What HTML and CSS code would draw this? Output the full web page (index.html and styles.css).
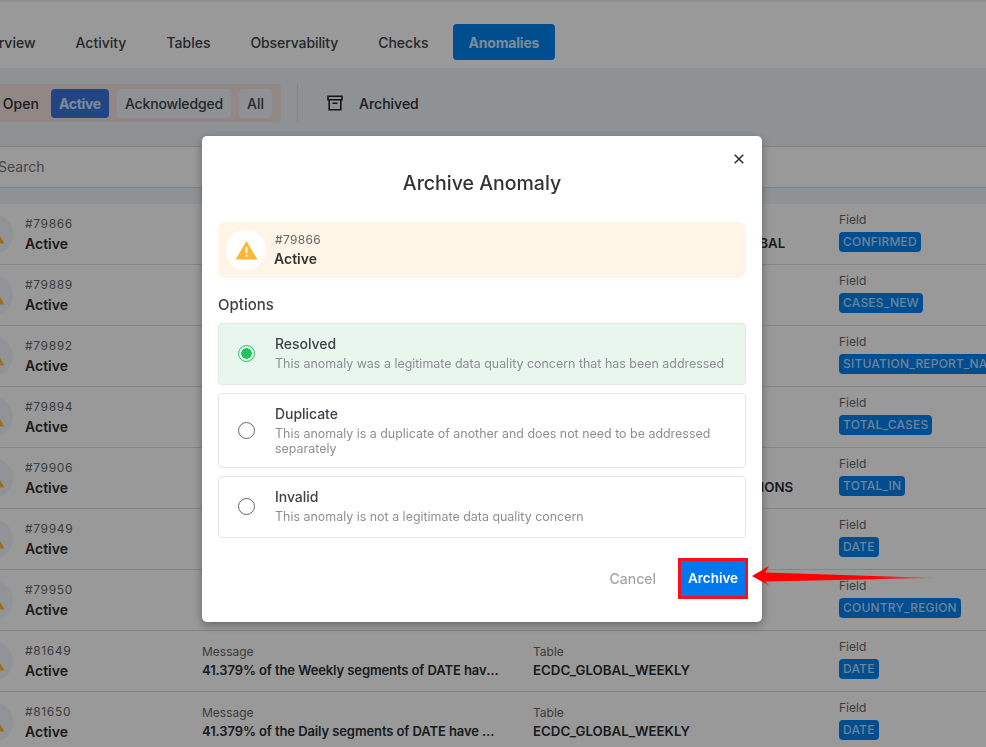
FILE: index.html
```html
<!DOCTYPE html>
<html lang="en">
<head>
<meta charset="utf-8">
<title>Archive Anomaly</title>
<link rel="stylesheet" href="styles.css">
</head>
<body>
<div class="page">
  <nav class="tabs">
    <a class="tab tab-first">Overview</a>
    <a class="tab">Activity</a>
    <a class="tab">Tables</a>
    <a class="tab tab-tight">Observability</a>
    <a class="tab">Checks</a>
    <a class="tab tab-active">Anomalies</a>
  </nav>
  <section class="panel">
    <div class="toolbar">
      <div class="pills">
        <span class="pill pill-open">Open</span>
        <span class="pill pill-active">Active</span>
        <span class="pill pill-plain">Acknowledged</span>
        <span class="pill pill-plain">All</span>
      </div>
      <div class="divider"></div>
      <svg class="archive-icon" viewBox="0 0 16 16" width="16" height="16"><path d="M1 1.2h14v3.6H1zM2.2 4.8v10h11.6v-10M5.5 8.2h5" fill="none" stroke="#1f2328" stroke-width="1.6"/></svg>
      <span class="archived">Archived</span>
    </div>
    <div class="search">Search</div>
  </section>
  <div class="rows">
    <div class="row"><div class="row-icon"><svg viewBox="0 0 24 21" width="23" height="20"><path class="tri" d="M12 1 23.500 20.500H.5z"/><path class="bang" d="M11 7.500h2v6.500h-2zM11 15.500h2v2h-2z"/></svg></div><div class="cell cell-id"><span class="id">#79866</span><strong>Active</strong></div><div class="cell"><span class="label">Message</span><strong class="clip">40.000% of the records have null values</strong></div><div class="cell"><span class="label">Table</span><strong class="table-name">COVID19_SITUATION_REPORT_GLOBAL</strong></div><div class="cell cell-field"><span class="label">Field</span><span class="tag">CONFIRMED</span></div></div>
    <div class="row"><div class="row-icon"><svg viewBox="0 0 24 21" width="23" height="20"><path class="tri" d="M12 1 23.500 20.500H.5z"/><path class="bang" d="M11 7.500h2v6.500h-2zM11 15.500h2v2h-2z"/></svg></div><div class="cell cell-id"><span class="id">#79889</span><strong>Active</strong></div><div class="cell"><span class="label">Message</span><strong class="clip">40.000% of the records have null values</strong></div><div class="cell"><span class="label">Table</span><strong class="table-name">ECDC</strong></div><div class="cell cell-field"><span class="label">Field</span><span class="tag">CASES_NEW</span></div></div>
    <div class="row"><div class="row-icon"><svg viewBox="0 0 24 21" width="23" height="20"><path class="tri" d="M12 1 23.500 20.500H.5z"/><path class="bang" d="M11 7.500h2v6.500h-2zM11 15.500h2v2h-2z"/></svg></div><div class="cell cell-id"><span class="id">#79892</span><strong>Active</strong></div><div class="cell"><span class="label">Message</span><strong class="clip">40.000% of the records have null values</strong></div><div class="cell"><span class="label">Table</span><strong class="table-name">ECDC</strong></div><div class="cell cell-field"><span class="label">Field</span><span class="tag">SITUATION_REPORT_NAME</span></div></div>
    <div class="row"><div class="row-icon"><svg viewBox="0 0 24 21" width="23" height="20"><path class="tri" d="M12 1 23.500 20.500H.5z"/><path class="bang" d="M11 7.500h2v6.500h-2zM11 15.500h2v2h-2z"/></svg></div><div class="cell cell-id"><span class="id">#79894</span><strong>Active</strong></div><div class="cell"><span class="label">Message</span><strong class="clip">40.000% of the records have null values</strong></div><div class="cell"><span class="label">Table</span><strong class="table-name">ECDC</strong></div><div class="cell cell-field"><span class="label">Field</span><span class="tag">TOTAL_CASES</span></div></div>
    <div class="row"><div class="row-icon"><svg viewBox="0 0 24 21" width="23" height="20"><path class="tri" d="M12 1 23.500 20.500H.5z"/><path class="bang" d="M11 7.500h2v6.500h-2zM11 15.500h2v2h-2z"/></svg></div><div class="cell cell-id"><span class="id">#79906</span><strong>Active</strong></div><div class="cell"><span class="label">Message</span><strong class="clip">40.000% of the records have null values</strong></div><div class="cell"><span class="label">Table</span><strong class="table-name">COVID19_STATE_CASES_VACCINATIONS</strong></div><div class="cell cell-field"><span class="label">Field</span><span class="tag">TOTAL_IN</span></div></div>
    <div class="row"><div class="row-icon"><svg viewBox="0 0 24 21" width="23" height="20"><path class="tri" d="M12 1 23.500 20.500H.5z"/><path class="bang" d="M11 7.500h2v6.500h-2zM11 15.500h2v2h-2z"/></svg></div><div class="cell cell-id"><span class="id">#79949</span><strong>Active</strong></div><div class="cell"><span class="label">Message</span><strong class="clip">40.000% of the records have null values</strong></div><div class="cell"><span class="label">Table</span><strong class="table-name">ECDC</strong></div><div class="cell cell-field"><span class="label">Field</span><span class="tag">DATE</span></div></div>
    <div class="row"><div class="row-icon"><svg viewBox="0 0 24 21" width="23" height="20"><path class="tri" d="M12 1 23.500 20.500H.5z"/><path class="bang" d="M11 7.500h2v6.500h-2zM11 15.500h2v2h-2z"/></svg></div><div class="cell cell-id"><span class="id">#79950</span><strong>Active</strong></div><div class="cell"><span class="label">Message</span><strong class="clip">40.000% of the records have null values</strong></div><div class="cell"><span class="label">Table</span><strong class="table-name">ECDC</strong></div><div class="cell cell-field"><span class="label">Field</span><span class="tag">COUNTRY_REGION</span></div></div>
    <div class="row"><div class="row-icon"><svg viewBox="0 0 24 21" width="23" height="20"><path class="tri" d="M12 1 23.500 20.500H.5z"/><path class="bang" d="M11 7.500h2v6.500h-2zM11 15.500h2v2h-2z"/></svg></div><div class="cell cell-id"><span class="id">#81649</span><strong>Active</strong></div><div class="cell"><span class="label">Message</span><strong class="clip">41.379% of the Weekly segments of DATE have records</strong></div><div class="cell"><span class="label">Table</span><strong class="table-name">ECDC_GLOBAL_WEEKLY</strong></div><div class="cell cell-field"><span class="label">Field</span><span class="tag">DATE</span></div></div>
    <div class="row"><div class="row-icon"><svg viewBox="0 0 24 21" width="23" height="20"><path class="tri" d="M12 1 23.500 20.500H.5z"/><path class="bang" d="M11 7.500h2v6.500h-2zM11 15.500h2v2h-2z"/></svg></div><div class="cell cell-id"><span class="id">#81650</span><strong>Active</strong></div><div class="cell"><span class="label">Message</span><strong class="clip">41.379% of the Daily segments of DATE have records</strong></div><div class="cell"><span class="label">Table</span><strong class="table-name">ECDC_GLOBAL_WEEKLY</strong></div><div class="cell cell-field"><span class="label">Field</span><span class="tag">DATE</span></div></div>
  </div>
</div>

<div class="overlay">
  <div class="modal">
    <button class="close" aria-label="Close"><svg viewBox="0 0 10 10" width="10" height="10"><path d="M.7.700 9.300 9.300M9.300.700.7 9.300" stroke="#2b2b2b" stroke-width="1.500" fill="none"/></svg></button>
    <h2 class="modal-title">Archive Anomaly</h2>
    <div class="alert">
      <div class="alert-icon"><svg viewBox="0 0 24 21" width="23" height="20"><path class="tri" d="M12 1 23.500 20.500H.5z"/><path class="bang" d="M11 7.500h2v6.500h-2zM11 15.500h2v2h-2z"/></svg></div>
      <div class="alert-text"><span class="id">#79866</span><strong>Active</strong></div>
    </div>
    <div class="options-label">Options</div>
    <div class="options">
      <label class="option option-on"><span class="radio radio-on"></span><span class="option-text"><span class="option-name">Resolved</span><span class="option-desc">This anomaly was a legitimate data quality concern that has been addressed</span></span></label>
      <label class="option"><span class="radio"></span><span class="option-text"><span class="option-name">Duplicate</span><span class="option-desc">This anomaly is a duplicate of another and does not need to be addressed separately</span></span></label>
      <label class="option"><span class="radio"></span><span class="option-text"><span class="option-name">Invalid</span><span class="option-desc">This anomaly is not a legitimate data quality concern</span></span></label>
    </div>
    <div class="footer">
      <span class="cancel">Cancel</span>
      <span class="archive-btn">Archive</span>
    </div>
    <svg class="arrow" viewBox="0 0 186 22" width="186" height="22">
      <defs><linearGradient id="fade" x1="0" x2="1" y1="0" y2="0"><stop offset="0" stop-color="#ff0000"/><stop offset=".65" stop-color="#ff0000"/><stop offset="1" stop-color="#ff0000" stop-opacity=".15"/></linearGradient></defs>
      <path d="M0 10 17 0 13 6.500 185 12 13 15.500 17 19.500z" fill="url(#fade)"/>
    </svg>
  </div>
</div>
</body>
</html>
```
FILE: styles.css
```css
* { box-sizing: border-box; }
html, body { margin: 0; height: 100%; overflow: hidden; }
body {
  font-family: Inter, "Noto Sans", "Liberation Sans", sans-serif;
  color: #2b2f33;
  background: #fff;
}
.page { width: 986px; height: 747px; overflow: hidden; }

.tabs {
  display: flex;
  align-items: center;
  gap: 8px;
  height: 68px;
  padding-top: 14px;
  margin-left: -44px;
  border-top: 2px solid #f0f0f0;
  font-size: 14px;
  font-weight: 500;
  color: #3d4348;
}
.tab { padding: 0 16px; height: 36px; line-height: 38px; border-radius: 4px; white-space: nowrap; }
.tab-tight { letter-spacing: -.1px; }
.tab-active { background: #0080f0; color: #cfe6ff; font-weight: 700; letter-spacing: -.2px; }

.panel { background: #edf4f9; height: 136px; padding-top: 16px; }
.toolbar { display: flex; align-items: center; height: 38px; font-size: 14px; font-weight: 500; }
.pills {
  display: flex;
  align-items: center;
  gap: 8px;
  width: 281px;
  height: 38px;
  padding-right: 9px;
  justify-content: flex-end;
  background: #f2e2e0;
  border-radius: 0 4px 4px 0;
}
.pill { height: 29px; line-height: 29px; border-radius: 4px; padding: 0 8px; white-space: nowrap; }
.pill-open { padding: 0 4px 0 0; }
.pill-active { background: #3a74d8; color: #cfe6ff; font-weight: 700; letter-spacing: -.3px; }
.pill-plain { background: #eef3f7; color: #3d4348; letter-spacing: -.15px; }
.pill-plain:last-child { letter-spacing: 0; }
.divider { width: 1px; height: 38px; margin: 0 29px 0 16px; background: #d5dde2; }
.archive-icon { margin-right: 16px; }
.search {
  margin-top: 24px;
  height: 42px;
  line-height: 39px;
  border-top: 1px solid #d4d8da;
  border-bottom: 1px solid #d4d8da;
  background: #fff;
  margin-left: -2px;
  font-size: 14px;
  color: #777;
}

.rows { margin-left: -27px; }
.row {
  display: grid;
  grid-template-columns: 52px 177px 331px 306px 1fr;
  height: 61px;
  border-bottom: 1px solid #dcdcdc;
  align-items: center;
}
.row-icon, .alert-icon {
  display: flex;
  align-items: center;
  justify-content: center;
  width: 40px;
  height: 40px;
  border-radius: 50%;
}
.row-icon { background: #f2f6fa; }
.tri { fill: #ffb733; }
.bang { fill: #fff; }
.cell { display: flex; flex-direction: column; min-width: 0; gap: 3px; white-space: nowrap; padding-top: 1px; }
.cell strong { font-size: 13px; font-weight: 600; color: #2b2f33; line-height: 17px; }
.cell-id { gap: 4px; padding-top: 0; }
.cell-id strong { font-size: 14px; }
.cell-field { gap: 5px; padding-top: 0; margin-top: -4px; }
.id { font-size: 12px; line-height: 15px; color: #666; letter-spacing: .65px; }
.label { font-size: 12px; line-height: 15px; color: #666; }
.clip { overflow: hidden; text-overflow: ellipsis; width: 297px; letter-spacing: -.1px; }
.cell .table-name { font-size: 13.3px; }
.tag {
  align-self: flex-start;
  height: 20px;
  line-height: 20px;
  padding: 0 4px;
  border-radius: 4px;
  background: #0080f0;
  color: #b8dcff;
  font-size: 12px;
  font-weight: 500;
  letter-spacing: .2px;
  white-space: nowrap;
}

.overlay { position: fixed; inset: 0; background: rgba(0, 0, 0, .4); }
.modal {
  position: absolute;
  left: 202px;
  top: 136px;
  width: 560px;
  height: 486px;
  padding: 0 16px;
  background: #fff;
  border-radius: 5px;
  box-shadow: 0 3px 10px rgba(0, 0, 0, .35);
}
.close {
  position: absolute;
  top: 18px;
  right: 18px;
  display: flex;
  padding: 0;
  border: 0;
  background: none;
}
.modal-title { margin: 0; padding-top: 34px; height: 86px; text-align: center; font-size: 19.5px; line-height: 26px; font-weight: 500; color: #333; }
.alert {
  display: flex;
  align-items: center;
  gap: 8px;
  height: 56px;
  padding-left: 8px;
  background: #fff5e6;
  border-radius: 8px;
}
.alert-icon { background: #fff; }
.alert-text { display: flex; flex-direction: column; gap: 3px; }
.alert-text .id { margin-left: 1px; letter-spacing: .35px; }
.alert-text strong { font-size: 14px; line-height: 18px; font-weight: 600; color: #333; }
.options-label { margin-top: 18px; height: 27px; font-size: 15px; line-height: 18px; font-weight: 500; color: #3d4348; }
.options { display: flex; flex-direction: column; gap: 8px; }
.option {
  display: flex;
  align-items: center;
  gap: 20px;
  padding: 10px 12px 11px 19px;
  min-height: 62px;
  border: 1px solid #e3e6e8;
  border-radius: 4px;
}
.option-on { background: #e8f6ee; border-color: #dcebe2; }
.radio { flex: none; width: 17px; height: 17px; border-radius: 50%; border: 1.500px solid #666; }
.radio-on { border-color: #21c45d; background: radial-gradient(circle, #21c45d 0 5px, transparent 5.500px); }
.option-text { display: flex; flex-direction: column; gap: 2px; align-self: flex-start; }
.option-name { font-size: 14px; line-height: 20px; font-weight: 500; color: #3d4348; letter-spacing: -.05px; }
.option-desc { font-size: 12.45px; line-height: 15px; color: #8b8f93; }
.footer { display: flex; align-items: center; justify-content: flex-end; gap: 22px; margin-top: 20px; margin-right: -2px; }
.cancel { font-size: 14px; font-weight: 500; color: #a3a6a9; }
.archive-btn {
  height: 41px;
  width: 70px;
  line-height: 35px;
  text-align: center;
  border: 3px solid #fb0f1e;
  background: #0078f0;
  color: #fff;
  font-size: 13.5px;
  font-weight: 600;
}
.arrow { position: absolute; left: 550px; top: 430px; }
```
